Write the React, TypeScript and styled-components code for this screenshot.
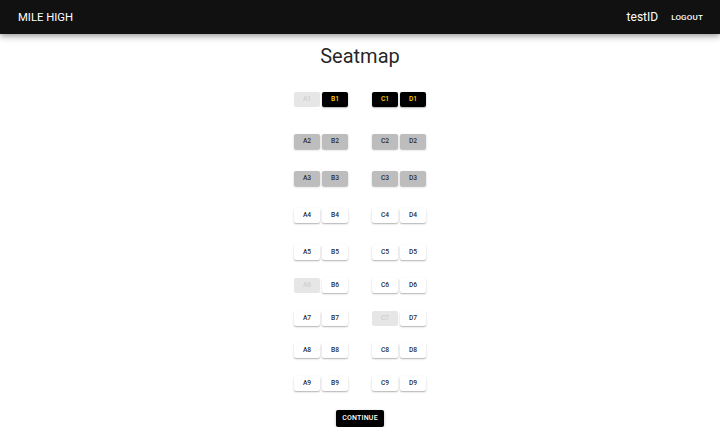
import React from "react";
import styled, { createGlobalStyle, css } from "styled-components";

const Global = createGlobalStyle`
  html, body { margin: 0; padding: 0; background: #fff; }
  body { font-family: Roboto, "Noto Sans", "Liberation Sans", sans-serif; color: rgba(0,0,0,0.87); }
`;

const Header = styled.header`
  height: 34px;
  background: #111111;
  display: flex;
  align-items: center;
  padding: 0 17px 0 18px;
  box-shadow: 0 2px 4px -1px rgba(0,0,0,0.2), 0 4px 5px 0 rgba(0,0,0,0.14), 0 1px 10px 0 rgba(0,0,0,0.12);
  position: relative;
  z-index: 1;
`;

const Brand = styled.div`
  color: #fff;
  font-size: 11.3px;
  font-weight: 400;
  flex: 1;
`;

const User = styled.div`
  color: #fff;
  font-size: 12px;
  font-weight: 400;
  margin-right: 13px;
`;

const Logout = styled.button`
  background: none;
  border: none;
  padding: 0;
  color: #fff;
  font-family: inherit;
  font-size: 8px;
  font-weight: 500;
  letter-spacing: 0.2px;
`;

const Main = styled.main`
  display: flex;
  flex-direction: column;
  align-items: center;
`;

const Title = styled.h1`
  margin: 10px 0 0;
  font-size: 20px;
  font-weight: 400;
  line-height: 24px;
  color: rgba(0,0,0,0.87);
`;

const Map = styled.div`
  display: flex;
  flex-direction: column;
  margin-top: 24px;
`;

const Row = styled.div<{ $gap: number }>`
  display: flex;
  gap: 23.5px;
  margin-top: ${(p) => p.$gap}px;
`;

const Pair = styled.div`
  display: flex;
  gap: 1.5px;
`;

type Kind = "open" | "taken" | "disabled" | "selected";

const Seat = styled.button<{ $kind: Kind }>`
  width: 26.5px;
  height: 14.5px;
  padding: 0;
  border: none;
  border-radius: 2px;
  font-family: inherit;
  font-size: 6.7px;
  font-weight: 500;
  display: flex;
  align-items: center;
  justify-content: center;
  box-shadow: 0 1px 2px rgba(0,0,0,0.22), 0 1px 1px rgba(0,0,0,0.1);
  ${(p) =>
    p.$kind === "open" &&
    css`
      background: #fff;
      color: rgba(0,0,0,0.87);
    `}
  ${(p) =>
    p.$kind === "taken" &&
    css`
      background: #bdbdbd;
      color: rgba(0,0,0,0.8);
    `}
  ${(p) =>
    p.$kind === "disabled" &&
    css`
      background: #e6e6e6;
      color: #cfcfcf;
      box-shadow: none;
    `}
  ${(p) =>
    p.$kind === "selected" &&
    css`
      background: #000;
      color: #ffd700;
    `}
`;

const Continue = styled.button`
  margin-top: 19px;
  width: 48px;
  height: 17.5px;
  padding: 0;
  border: none;
  border-radius: 2px;
  background: #000;
  color: #fff;
  font-family: inherit;
  font-size: 7px;
  font-weight: 500;
  letter-spacing: 0.2px;
  box-shadow: 0 1px 3px rgba(0,0,0,0.25);
`;

const cols = ["A", "B", "C", "D"];
const gaps = [0, 27.5, 22.5, 22.5, 22.5, 18.5, 18.5, 17.5, 18.5];

const kindOf = (id: string): Kind => {
  if (["A1", "A6", "C7"].includes(id)) return "disabled";
  if (["B1", "C1", "D1"].includes(id)) return "selected";
  if (["A2", "B2", "C2", "D2", "A3", "B3", "C3", "D3"].includes(id)) return "taken";
  return "open";
};

export default function App() {
  return (
    <>
      <Global />
      <Header>
        <Brand>MILE HIGH</Brand>
        <User>testID</User>
        <Logout>LOGOUT</Logout>
      </Header>
      <Main>
        <Title>Seatmap</Title>
        <Map>
          {gaps.map((g, i) => {
            const n = i + 1;
            return (
              <Row key={n} $gap={g}>
                {[cols.slice(0, 2), cols.slice(2)].map((pair, j) => (
                  <Pair key={j}>
                    {pair.map((c) => {
                      const id = `${c}${n}`;
                      return (
                        <Seat key={id} $kind={kindOf(id)}>
                          {id}
                        </Seat>
                      );
                    })}
                  </Pair>
                ))}
              </Row>
            );
          })}
        </Map>
        <Continue>CONTINUE</Continue>
      </Main>
    </>
  );
}
